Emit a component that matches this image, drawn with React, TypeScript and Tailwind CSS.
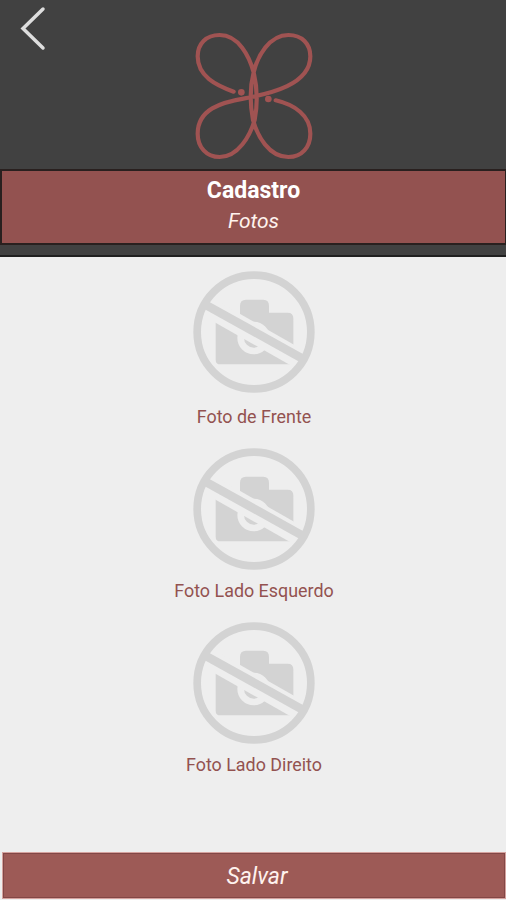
const photos = [
  { label: "Foto de Frente", row: "h-[177px]", text: "mt-[12px]" },
  { label: "Foto Lado Esquerdo", row: "h-[174px]", text: "mt-[9px]" },
  { label: "Foto Lado Direito", row: "h-[174px]", text: "mt-[9px]" },
];

function Butterfly() {
  return (
    <svg width="150" height="150" viewBox="0 0 450 450" fill="none" stroke="#a05352" strokeWidth="12.5" strokeLinecap="round" aria-hidden="true">
      <path d="M161 215C108 196 53 169 53 109C53 71 78 45 119 45C176 45 208 109 221 157C232 203 234 248 224 300C210 348 174 411 119 411C79 411 53 381 53 341C53 268 123 247 194 235C271 221 391 194 391 109C391 71 366 45 325 45C268 45 232 109 221 157C209 203 209 248 219 300C232 347 266 411 325 411C366 411 391 381 391 341C391 286 343 254 287 241" />
      <circle cx="184" cy="217" r="10" fill="#a05352" stroke="none" />
      <circle cx="265" cy="237" r="10" fill="#a05352" stroke="none" />
    </svg>
  );
}

function NoPhoto() {
  return (
    <svg className="shrink-0" width="122" height="122" viewBox="39 32 366 366" fill="none" aria-hidden="true">
      <path fill="#d3d3d3" d="M107 180H180V136Q180 118 198 118H250Q267 118 267 137V157H323Q340 157 340 174V312H121Q107 312 107 298Z" />
      <circle cx="221" cy="233" r="39" stroke="#eeeeee" strokeWidth="20" />
      <path d="M75 135L379 308" stroke="#eeeeee" strokeWidth="59" />
      <path d="M78 134L368 295" stroke="#d3d3d3" strokeWidth="26" />
      <circle cx="222" cy="215" r="170.5" stroke="#d3d3d3" strokeWidth="23" />
    </svg>
  );
}

export default function App() {
  return (
    <main className="flex h-[900px] w-[506px] flex-col overflow-hidden bg-[#eeeeee] font-[Roboto,sans-serif]">
      <header className="flex h-[257px] shrink-0 flex-col border-b-2 border-[#202020] bg-[#414141]">
        <div className="grid h-[169px] shrink-0 grid-cols-[180px_150px_1fr]">
          <button type="button" aria-label="Voltar" className="flex h-[60px] w-[60px] items-start pt-[5px] pl-[18px]">
            <svg width="32" height="46" viewBox="18 5 32 46" fill="none" aria-hidden="true">
              <path d="M43 9L23 28.5L43 48" stroke="#dedede" strokeWidth="3.5" strokeLinecap="round" />
            </svg>
          </button>
          <div className="h-[149px] self-end overflow-hidden"><Butterfly /></div>
        </div>
        <div className="h-[76px] shrink-0 border-2 border-r-1 border-[#29201f] bg-[#935250] text-center text-white">
          <h1 className="h-[34px] pt-px text-[23px] leading-[37px] font-bold">Cadastro</h1>
          <p className="h-[30px] text-[21px] leading-[32px] text-[#fff2ee] italic">Fotos</p>
        </div>
      </header>
      <section className="flex flex-1 flex-col items-center pt-[14px] pl-[2px]">
        {photos.map(({ label, row, text }) => (
          <div key={label} className={`flex shrink-0 flex-col items-center ${row}`}>
            <NoPhoto />
            <p className={`text-[17.9px] leading-[24px] whitespace-nowrap text-[#935250] ${text}`}>{label}</p>
          </div>
        ))}
      </section>
      <footer className="mb-[1px] ml-[2px] h-[47px] shrink-0 border border-[#d5a29e] bg-[#9d5a56]">
        <button type="button" className="flex h-full w-full items-center justify-center border border-[#834746] pt-[3px] pl-[6px] text-[23px] text-[#fff2ee] italic">Salvar</button>
      </footer>
    </main>
  );
}
